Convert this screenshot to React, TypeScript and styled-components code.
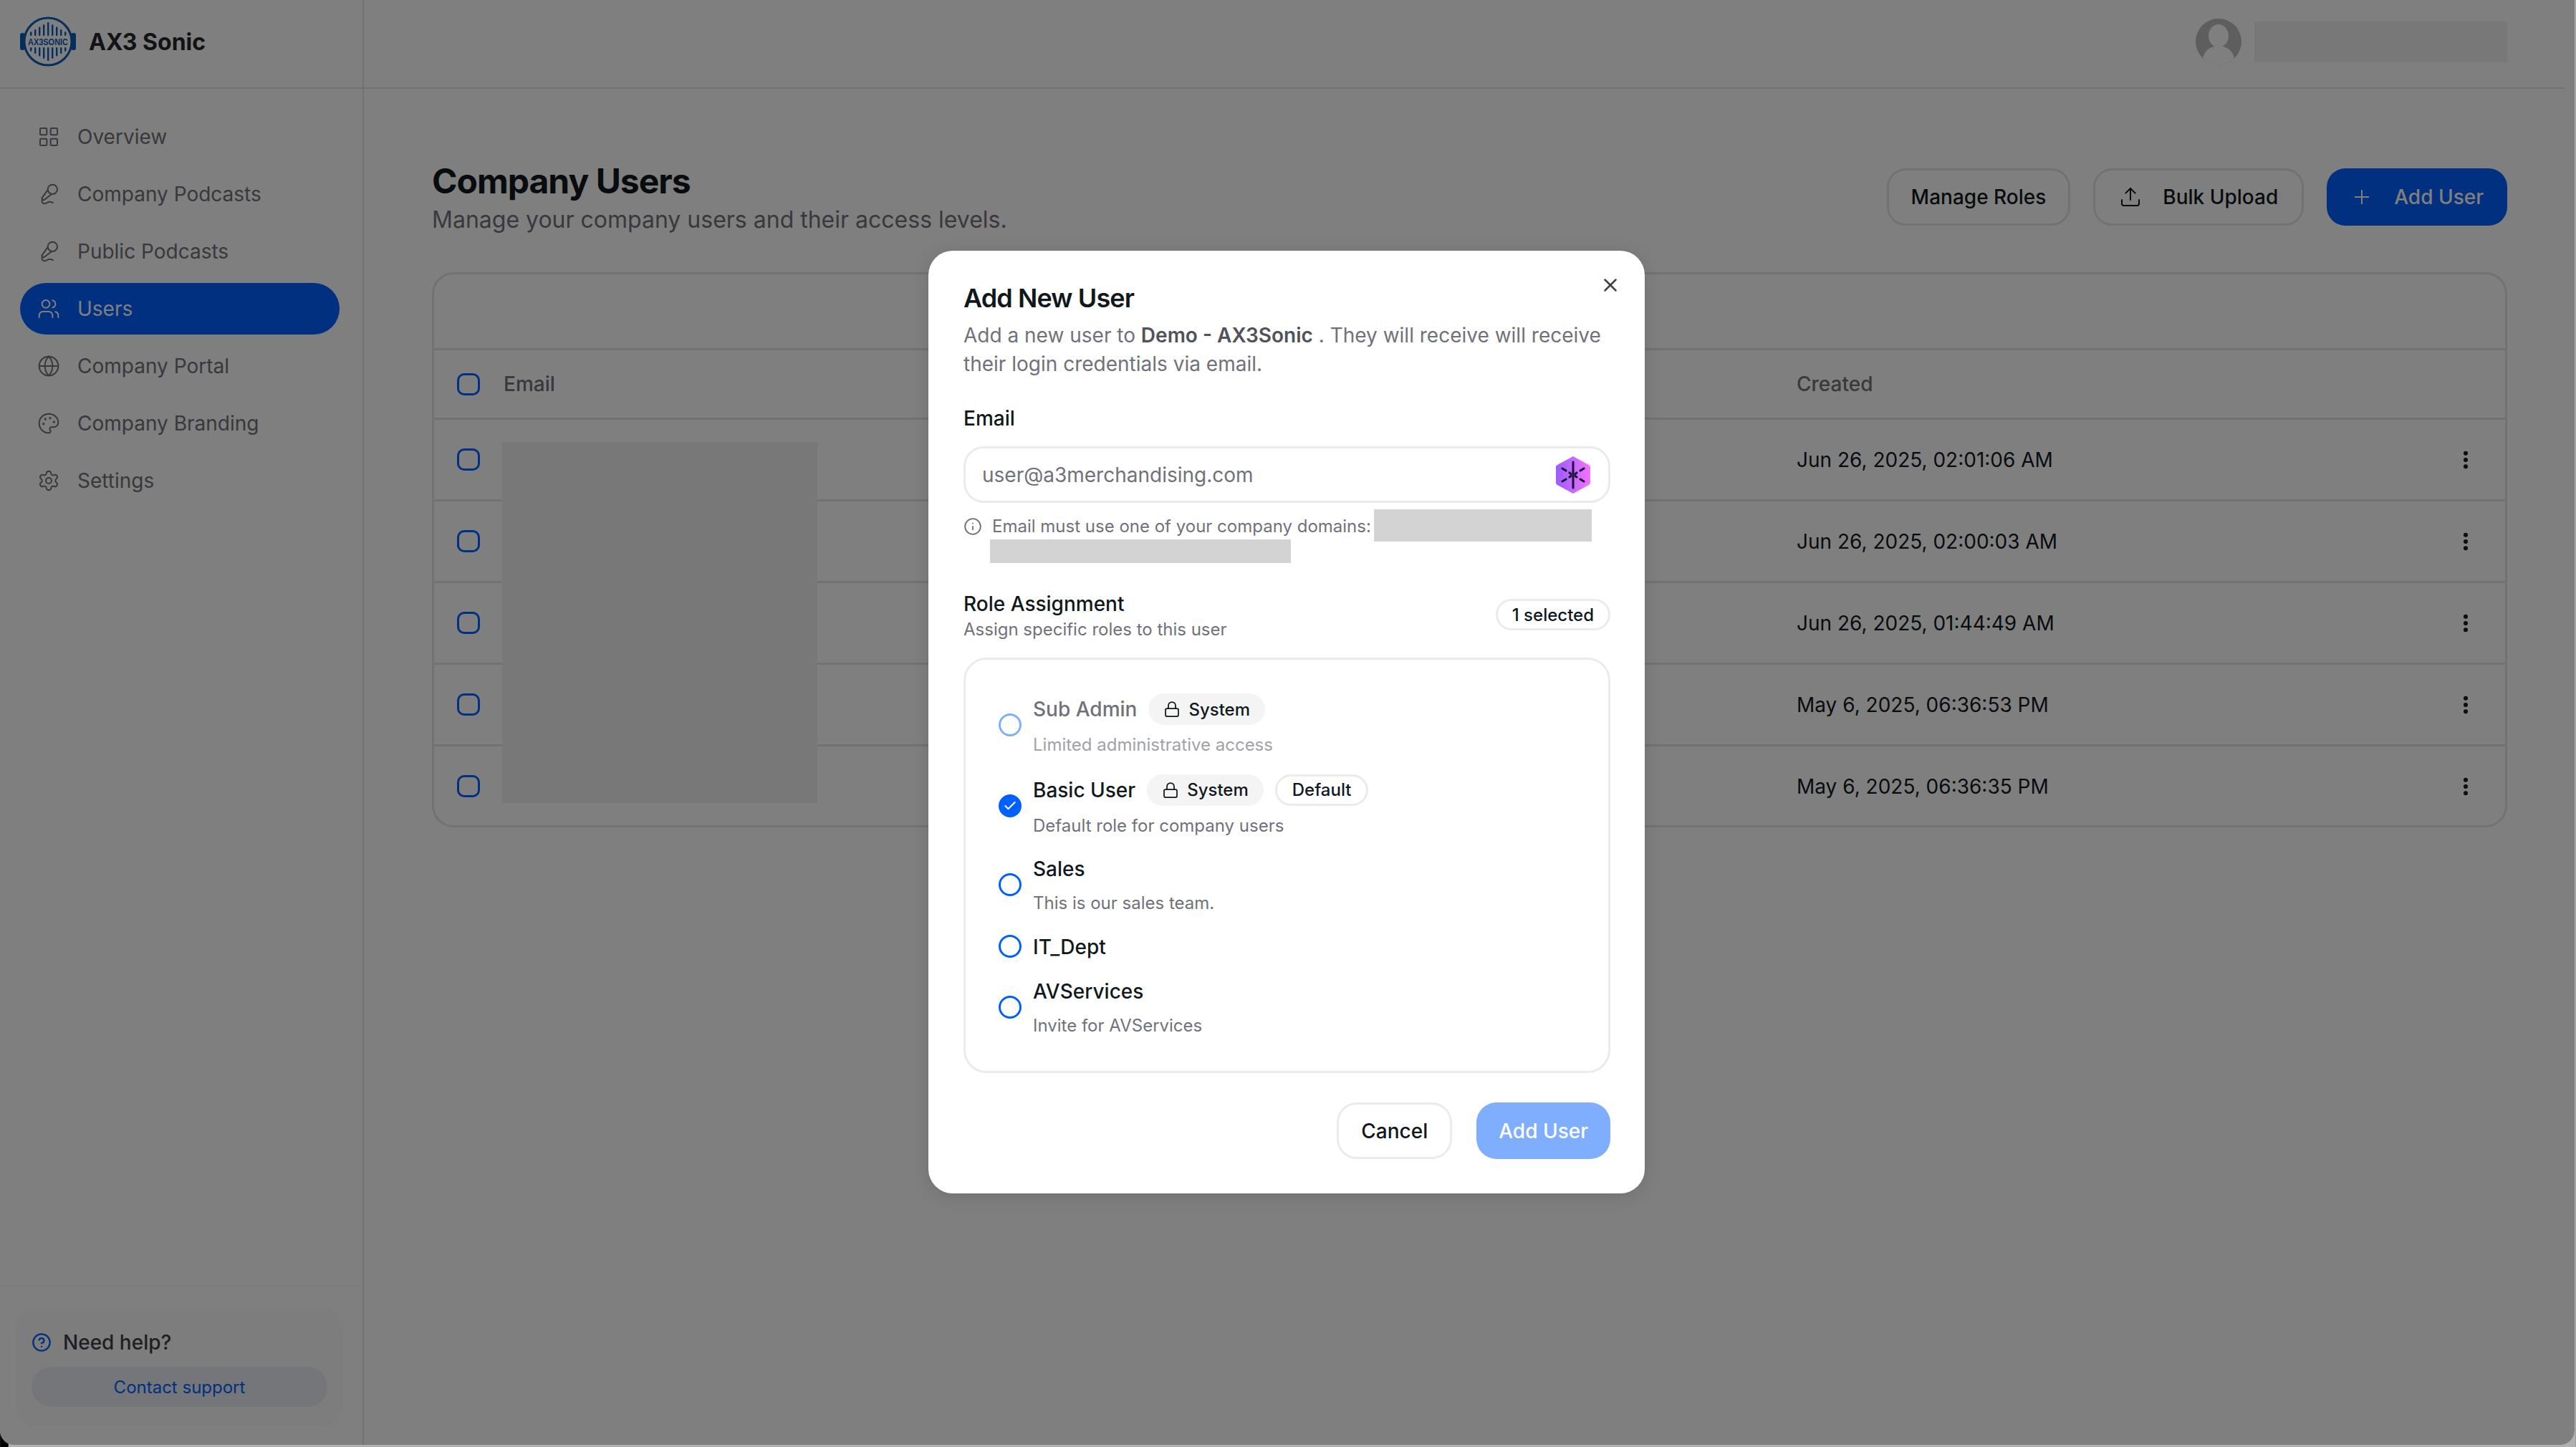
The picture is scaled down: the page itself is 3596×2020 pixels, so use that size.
import React from "react";
import styled, {createGlobalStyle} from "styled-components";
import {
    Check,
    CircleHelp,
    EllipsisVertical,
    Globe,
    Info,
    LayoutGrid,
    Lock,
    MicVocal,
    Palette,
    Plus,
    Settings,
    Upload,
    Users,
    X,
} from "lucide-react";

const GlobalStyle = createGlobalStyle`
    html {
        background: linear-gradient(to right, #000 12px, #b0b0b0 12px);
    }
    html, body {
        margin: 0;
        padding: 0;
    }
    body {
        font-family: Inter, "Liberation Sans", sans-serif;
        color: #11181c;
    }
    * {
        box-sizing: border-box;
    }
`

const Page = styled.div`
    position: relative;
    width: 3594px;
    height: 2017px;
    display: flex;
    background: #fff;
    overflow: hidden;
    border-radius: 0 0 20px 20px;
`
const Sidebar = styled.aside`
    width: 508px;
    flex-shrink: 0;
    display: flex;
    flex-direction: column;
    border-right: 2px solid #e4e4e7;
`
const Brand = styled.div`
    height: 124px;
    padding: 0 0 6px 28px;
    display: flex;
    align-items: center;
    gap: 18px;
    border-bottom: 2px solid #e4e4e7;
    font-size: 32px;
    font-weight: 700;
    color: #27272a;
`
const Nav = styled.nav`
    flex: 1;
    padding: 31px 32px 0 28px;
    display: flex;
    flex-direction: column;
    gap: 8px;
`
const NavItem = styled.div<{ $active?: boolean }>`
    height: 72px;
    padding: 0 24px;
    display: flex;
    align-items: center;
    gap: 24px;
    border-radius: 36px;
    font-size: 28px;
    color: ${p => p.$active ? "#fff" : "#71717a"};
    background: ${p => p.$active ? "#0060ff" : "transparent"};
    svg {
        flex-shrink: 0;
    }
`
const HelpArea = styled.div`
    padding: 32px 29px 27px 23px;
    border-top: 2px solid #fafafa;
`
const HelpCard = styled.div`
    height: 162px;
    padding: 26px 20px 0 21px;
    background: #fafafa;
    border-radius: 24px;
`
const HelpTitle = styled.div`
    height: 40px;
    display: flex;
    align-items: center;
    gap: 16px;
    font-size: 28px;
    font-weight: 500;
    color: #3f3f46;
    svg {
        color: #0060ff;
    }
`
const SupportLink = styled.div`
    margin-top: 14px;
    height: 56px;
    display: flex;
    align-items: center;
    justify-content: center;
    border-radius: 28px;
    background: #e8ecf5;
    font-size: 24px;
    color: #0060ff;
`

const Main = styled.main`
    flex: 1;
    min-width: 0;
    display: flex;
    flex-direction: column;
`
const TopBar = styled.header`
    height: 124px;
    margin-right: 14px;
    padding: 0 80px 6px 0;
    display: flex;
    justify-content: flex-end;
    align-items: center;
    gap: 18px;
    border-bottom: 2px solid #e4e4e7;
`
const UserMask = styled.div`
    width: 353px;
    height: 57px;
    background: #f0f0f0;
`
const Content = styled.div`
    padding: 102px 94px 0 95px;
`
const PageHead = styled.div`
    display: flex;
    justify-content: space-between;
    align-items: flex-start;
`
const Title = styled.h1`
    margin: 0;
    font-size: 48px;
    line-height: 54px;
    font-weight: 700;
    letter-spacing: -1px;
    color: #11181c;
`
const Subtitle = styled.p`
    margin: 5px 0 0;
    font-size: 32px;
    line-height: 44px;
    color: #71717a;
`
const Actions = styled.div`
    margin-top: 9px;
    display: flex;
    gap: 32px;
`
const Button = styled.button<{ $primary?: boolean }>`
    height: 80px;
    padding: 0 33px;
    display: flex;
    align-items: center;
    gap: 29px;
    border-radius: 26px;
    font-family: inherit;
    font-size: 28px;
    font-weight: 500;
    border: ${p => p.$primary ? "none" : "3px solid #e4e4e7"};
    color: ${p => p.$primary ? "#fff" : "#11181c"};
    background: ${p => p.$primary ? "#0060ff" : "#fff"};
`
const TextButton = styled(Button)`
    padding: 0 31px;
`
const TableCard = styled.div`
    position: relative;
    margin-top: 51px;
    height: 775px;
    border: 3px solid #e4e4e7;
    border-radius: 30px;
    overflow: hidden;
`
const Toolbar = styled.div`
    height: 106px;
    border-bottom: 3px solid #e4e4e7;
`
const Row = styled.div<{ $head?: boolean }>`
    height: ${p => p.$head ? "97px" : "114px"};
    display: grid;
    grid-template-columns: 97px 1805px 918px 1fr;
    align-items: center;
    font-size: 28px;
    color: ${p => p.$head ? "#71717a" : "#11181c"};
    font-weight: ${p => p.$head ? 500 : 400};
    border-bottom: 3px solid #e4e4e7;
    &:last-child {
        border-bottom: none;
    }
`
const Box = styled.span`
    width: 32px;
    height: 31px;
    margin-left: 32px;
    border: 3px solid #0060ff;
    border-radius: 10px;
    display: block;
`
const Kebab = styled.span`
    display: flex;
    align-items: center;
    svg {
        color: #11181c;
    }
`
const EmailMask = styled.div`
    position: absolute;
    left: 95px;
    top: 234px;
    width: 440px;
    height: 504px;
    background: #f0f0f0;
`

const Overlay = styled.div`
    position: absolute;
    inset: 0;
    background: rgba(0, 0, 0, 0.5);
`
const Modal = styled.div`
    position: absolute;
    left: 1296px;
    top: 350px;
    width: 1000px;
    height: 1316px;
    padding: 42px 48px 0 49px;
    background: #fff;
    border-radius: 34px;
    box-shadow: 0 4px 24px rgba(0, 0, 0, 0.12);
`
const CloseButton = styled.span`
    position: absolute;
    right: 33px;
    top: 33px;
    display: flex;
    color: #3f3f46;
`
const ModalTitle = styled.h2`
    margin: 0;
    font-size: 36px;
    line-height: 48px;
    font-weight: 600;
    letter-spacing: -0.9px;
    color: #11181c;
`
const ModalText = styled.p`
    margin: 8px 0 0;
    font-size: 28px;
    line-height: 40px;
    color: #71717a;
    b {
        font-weight: 600;
        color: #52525b;
    }
`
const FieldLabel = styled.div`
    margin-top: 36px;
    font-size: 28px;
    line-height: 40px;
    font-weight: 500;
    color: #11181c;
`
const InputBox = styled.div`
    margin-top: 19px;
    height: 79px;
    padding: 0 24px 0 23px;
    display: flex;
    align-items: center;
    justify-content: space-between;
    border: 3px solid #ebebed;
    border-radius: 28px;
    font-size: 28px;
    color: #71717a;
`
const Helper = styled.div`
    position: relative;
    margin-top: 17px;
    height: 64px;
    display: flex;
    gap: 14px;
    font-size: 24px;
    line-height: 32px;
    color: #71717a;
    svg {
        flex-shrink: 0;
        margin-top: 3px;
    }
`
const DomainMask = styled.span<{ $second?: boolean }>`
    position: absolute;
    left: ${p => p.$second ? "37px" : "573px"};
    top: ${p => p.$second ? "34px" : "-8px"};
    width: ${p => p.$second ? "420px" : "304px"};
    height: ${p => p.$second ? "33px" : "45px"};
    background: #d3d3d3;
`
const RoleHead = styled.div`
    margin-top: 40px;
    display: flex;
    justify-content: space-between;
    align-items: flex-start;
`
const RoleTitle = styled.div`
    font-size: 28px;
    line-height: 40px;
    font-weight: 500;
    color: #11181c;
`
const RoleSub = styled.div`
    font-size: 24px;
    line-height: 32px;
    color: #71717a;
`
const Chip = styled.span<{ $soft?: boolean }>`
    height: 44px;
    padding: 0 21px;
    display: inline-flex;
    align-items: center;
    gap: 11px;
    border-radius: 22px;
    font-size: 24px;
    font-weight: 500;
    color: #11181c;
    border: ${p => p.$soft ? "none" : "3px solid #ebebed"};
    background: ${p => p.$soft ? "#f4f4f5" : "#fff"};
`
const SelectedChip = styled(Chip)`
    margin-top: 13px;
    padding: 0 20px;
`
const RoleList = styled.div`
    margin-top: 23px;
    height: 580px;
    padding: 47px 40px 0 46px;
    display: flex;
    flex-direction: column;
    gap: 22.5px;
    border: 3px solid #ebebed;
    border-radius: 32px;
`
const RoleRow = styled.div`
    display: flex;
    align-items: center;
    gap: 16px;
`
const Radio = styled.span<{ $checked?: boolean; $muted?: boolean }>`
    width: 32px;
    height: 32px;
    margin-top: -2px;
    flex-shrink: 0;
    display: flex;
    align-items: center;
    justify-content: center;
    border-radius: 50%;
    border: 3px solid ${p => p.$muted ? "#80aeff" : "#0060ff"};
    background: ${p => p.$checked ? "#0060ff" : "#fff"};
    color: #fff;
`
const RoleName = styled.div<{ $muted?: boolean }>`
    min-height: 40px;
    display: flex;
    align-items: center;
    gap: 16px;
    font-size: 28px;
    font-weight: 500;
    color: ${p => p.$muted ? "#71717a" : "#11181c"};
`
const RoleDesc = styled.div<{ $muted?: boolean }>`
    margin-top: 10px;
    font-size: 24px;
    line-height: 36px;
    color: ${p => p.$muted ? "#a1a1aa" : "#71717a"};
`
const ModalActions = styled.div`
    margin-top: 41px;
    display: flex;
    justify-content: flex-end;
    gap: 34px;
`
const ModalButton = styled.button<{ $primary?: boolean }>`
    height: 79px;
    padding: 0 31px;
    border-radius: 28px;
    font-family: inherit;
    font-size: 28px;
    font-weight: 500;
    border: ${p => p.$primary ? "none" : "3px solid #ebebed"};
    color: ${p => p.$primary ? "#fff" : "#11181c"};
    background: ${p => p.$primary ? "#80aeff" : "#fff"};
`

const Logo = () => (
    <svg width="78" height="70" viewBox="0 0 78 70">
        <rect x="0" y="23" width="7" height="24" rx="3" fill="#0a5cb8"/>
        <rect x="71" y="23" width="7" height="24" rx="3" fill="#0a5cb8"/>
        <circle cx="39" cy="35" r="33" fill="none" stroke="#0a5cb8" strokeWidth="3"/>
        {[-24, -18, -12, -6, 0, 6, 12, 18, 24].map(dx => {
            const half = 27 - Math.abs(dx) * 0.55
            return (
                <g key={dx} fill="#0a5cb8">
                    <rect x={38 + dx} y={35 - half} width="2.4" height={half - 8} rx="1"/>
                    <rect x={38 + dx} y={43} width="2.4" height={half - 8} rx="1"/>
                </g>
            )
        })}
        <text x="39" y="40" textAnchor="middle" fontFamily="Liberation Sans, sans-serif" fontSize="13"
              fill="#0a5cb8" textLength="56" lengthAdjust="spacingAndGlyphs">AX3SONIC</text>
    </svg>
)

const Avatar = () => (
    <svg width="64" height="64" viewBox="0 0 64 64">
        <defs>
            <clipPath id="avatar-clip">
                <circle cx="32" cy="32" r="32"/>
            </clipPath>
        </defs>
        <g clipPath="url(#avatar-clip)">
            <rect width="64" height="64" fill="#bdbdbd"/>
            <ellipse cx="32" cy="24" rx="14" ry="16" fill="#fff"/>
            <ellipse cx="32" cy="58" rx="22" ry="20" fill="#fff"/>
        </g>
    </svg>
)

const PasswordBadge = () => (
    <svg width="50" height="54" viewBox="0 0 50 54">
        <defs>
            <linearGradient id="badge-fill" x1="0" x2="1" y1="0" y2="0">
                <stop offset="0" stopColor="#9b5cff"/>
                <stop offset="1" stopColor="#f472ff"/>
            </linearGradient>
        </defs>
        <path d="M25 1 L47 13 Q49 14 49 16 L49 38 Q49 40 47 41 L25 53 L3 41 Q1 40 1 38 L1 16 Q1 14 3 13 Z"
              fill="url(#badge-fill)"/>
        <g stroke="#1b1338" strokeLinecap="round">
            <path d="M25 9 V45" strokeWidth="3"/>
            <path d="M10 18 L15 21 M35 33 L40 36 M40 18 L35 21 M15 33 L10 36 M20 24 L22 25.5 M30 30 L28 28.5 M30 24 L28 25.5 M20 30 L22 28.5"
                  strokeWidth="3.2"/>
        </g>
    </svg>
)

const navItems = [
    {label: "Overview", Icon: LayoutGrid},
    {label: "Company Podcasts", Icon: MicVocal},
    {label: "Public Podcasts", Icon: MicVocal},
    {label: "Users", Icon: Users, active: true},
    {label: "Company Portal", Icon: Globe},
    {label: "Company Branding", Icon: Palette},
    {label: "Settings", Icon: Settings},
]

const dates = [
    "Jun 26, 2025, 02:01:06 AM",
    "Jun 26, 2025, 02:00:03 AM",
    "Jun 26, 2025, 01:44:49 AM",
    "May 6, 2025, 06:36:53 PM",
    "May 6, 2025, 06:36:35 PM",
]

const roles = [
    {name: "Sub Admin", desc: "Limited administrative access", system: true, muted: true},
    {name: "Basic User", desc: "Default role for company users", system: true, isDefault: true, checked: true},
    {name: "Sales", desc: "This is our sales team."},
    {name: "IT_Dept"},
    {name: "AVServices", desc: "Invite for AVServices"},
]

const App = () => {
    return (
        <Page>
            <GlobalStyle/>
            <Sidebar>
                <Brand><Logo/>AX3 Sonic</Brand>
                <Nav>
                    {navItems.map(({label, Icon, active}) => (
                        <NavItem key={label} $active={active}>
                            <Icon size={32} strokeWidth={1.5}/>
                            {label}
                        </NavItem>
                    ))}
                </Nav>
                <HelpArea>
                    <HelpCard>
                        <HelpTitle><CircleHelp size={28} strokeWidth={2}/>Need help?</HelpTitle>
                        <SupportLink>Contact support</SupportLink>
                    </HelpCard>
                </HelpArea>
            </Sidebar>

            <Main>
                <TopBar>
                    <Avatar/>
                    <UserMask/>
                </TopBar>
                <Content>
                    <PageHead>
                        <div>
                            <Title>Company Users</Title>
                            <Subtitle>Manage your company users and their access levels.</Subtitle>
                        </div>
                        <Actions>
                            <TextButton>Manage Roles</TextButton>
                            <Button><Upload size={32} strokeWidth={1.5}/>Bulk Upload</Button>
                            <Button $primary><Plus size={32} strokeWidth={1.5}/>Add User</Button>
                        </Actions>
                    </PageHead>
                    <TableCard>
                        <Toolbar/>
                        <Row $head>
                            <Box/>
                            <span>Email</span>
                            <span>Created</span>
                            <span/>
                        </Row>
                        {dates.map(date => (
                            <Row key={date}>
                                <Box/>
                                <span/>
                                <span>{date}</span>
                                <Kebab><EllipsisVertical size={32} strokeWidth={2.5}/></Kebab>
                            </Row>
                        ))}
                        <EmailMask/>
                    </TableCard>
                </Content>
            </Main>

            <Overlay/>

            <Modal>
                <CloseButton><X size={30} strokeWidth={2}/></CloseButton>
                <ModalTitle>Add New User</ModalTitle>
                <ModalText>
                    Add a new user to <b>Demo - AX3Sonic</b> . They will receive will receive their login credentials via email.
                </ModalText>
                <FieldLabel>Email</FieldLabel>
                <InputBox>
                    user@a3merchandising.com
                    <PasswordBadge/>
                </InputBox>
                <Helper>
                    <Info size={26} strokeWidth={1.75}/>
                    <span>Email must use one of your company domains:</span>
                    <DomainMask/>
                    <DomainMask $second/>
                </Helper>
                <RoleHead>
                    <div>
                        <RoleTitle>Role Assignment</RoleTitle>
                        <RoleSub>Assign specific roles to this user</RoleSub>
                    </div>
                    <SelectedChip>1 selected</SelectedChip>
                </RoleHead>
                <RoleList>
                    {roles.map(role => (
                        <RoleRow key={role.name}>
                            <Radio $checked={role.checked} $muted={role.muted}>
                                {role.checked && <Check size={20} strokeWidth={2.5}/>}
                            </Radio>
                            <div>
                                <RoleName $muted={role.muted}>
                                    {role.name}
                                    {role.system && <Chip $soft><Lock size={24} strokeWidth={1.75}/>System</Chip>}
                                    {role.isDefault && <Chip>Default</Chip>}
                                </RoleName>
                                {role.desc && <RoleDesc $muted={role.muted}>{role.desc}</RoleDesc>}
                            </div>
                        </RoleRow>
                    ))}
                </RoleList>
                <ModalActions>
                    <ModalButton>Cancel</ModalButton>
                    <ModalButton $primary>Add User</ModalButton>
                </ModalActions>
            </Modal>
        </Page>
    )
}

export default App
